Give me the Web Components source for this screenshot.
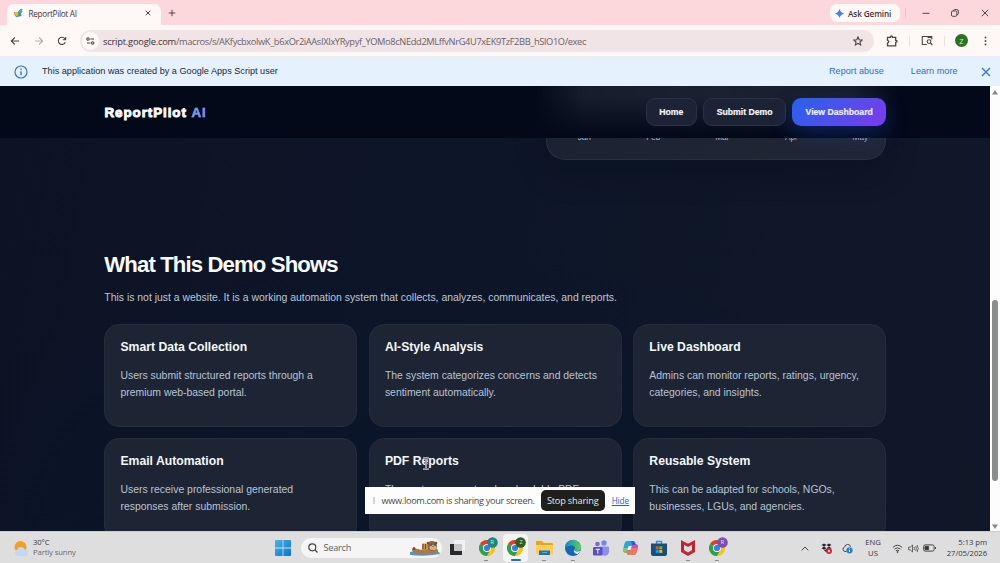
<!DOCTYPE html>
<html lang="en">
<head>
<meta charset="utf-8">
<title>ReportPilot AI</title>
<style>
  html, body { margin: 0; height: 100%; overflow: hidden; }
  body { font-family: "Liberation Sans", Arial, sans-serif; }
</style>
</head>
<body>
<desktop-screen>
  <tab-strip>ReportPilot AI</tab-strip>
  <url-bar>
    <span slot="host">script.google.com</span>
    <span slot="path">/macros/s/AKfycbxolwK_b6xOr2iAAsIXIxYRypyf_YOMo8cNEdd2MLffvNrG4U7xEK9TzF2BB_hSlO1O/exec</span>
  </url-bar>
  <info-bar>This application was created by a Google Apps Script user</info-bar>
  <site-page>
    <site-nav slot="nav">
      <nav-button>Home</nav-button>
      <nav-button>Submit Demo</nav-button>
      <nav-button class="primary">View Dashboard</nav-button>
    </site-nav>
    <chart-card slot="hero"></chart-card>
    <section-head>
      What This Demo Shows
      <span slot="lead">This is not just a website. It is a working automation system that collects, analyzes, communicates, and reports.</span>
    </section-head>
    <card-grid>
      <feature-card heading="Smart Data Collection">Users submit structured reports through a premium web-based portal.</feature-card>
      <feature-card heading="AI-Style Analysis">The system categorizes concerns and detects sentiment automatically.</feature-card>
      <feature-card heading="Live Dashboard">Admins can monitor reports, ratings, urgency, categories, and insights.</feature-card>
      <feature-card heading="Email Automation">Users receive professional generated responses after submission.</feature-card>
      <feature-card heading="PDF Reports">The system generates downloadable PDF</feature-card>
      <feature-card heading="Reusable System">This can be adapted for schools, NGOs, businesses, LGUs, and agencies.</feature-card>
    </card-grid>
  </site-page>
  <task-bar></task-bar>
  <share-bar slot="overlay">www.loom.com is sharing your screen.</share-bar>
  <text-cursor slot="overlay"></text-cursor>
</desktop-screen>

<script>
// small helper so every element gets its own open shadow root
function define(name, html) {
  const template = document.createElement("template");
  template.innerHTML = html;
  customElements.define(name, class extends HTMLElement {
    constructor() {
      super();
      this.attachShadow({ mode: "open" });
      this.shadowRoot.appendChild(template.content.cloneNode(true));
    }
  });
}

define("desktop-screen", `
  <style>
    :host { display: grid; grid-template-rows: 25px 31px 30px 445px 32px; width: 1000px; height: 563px; overflow: hidden; position: relative; }
  </style>
  <slot></slot>
  <slot name="overlay"></slot>`);

define("tab-strip", `
  <style>
    :host { display: flex; align-items: center; background: #fcd8dc; padding: 0 11px 0 7px; color: #3f3438; font: 8.2px "Open Sans", "Noto Sans", sans-serif; }
    .tab { display: flex; align-items: center; align-self: flex-end; box-sizing: border-box; width: 154px; height: 21.5px; padding: 0 10px 2px 6px; border-radius: 7px 7px 0 0; background: #fff8f7; }
    .name { flex: 1; margin-left: 5.500px; letter-spacing: -.3px; }
    .plus { margin-left: 7px; }
    .gemini { display: flex; align-items: center; gap: 4px; margin-left: auto; box-sizing: border-box; width: 70px; height: 18px; padding-left: 5px; border-radius: 7px; background: #fff8f7; font-weight: 600; letter-spacing: -.12px; margin-top: 1px; }
    .line { width: 1px; height: 10px; margin: 0 16px 0 5px; background: #e9c3c9; }
    .win { margin-right: 19px; }
    .win:last-child { margin-right: 0; }
    svg { display: block; fill: none; stroke: #51454a; stroke-width: 1; }
  </style>
  <div class="tab">
    <svg width="10" height="10" viewBox="0 0 10 10" style="stroke:none">
      <path d="M1 4 5 6 4 8.500 1.500 7z" fill="#ea4335"/><path d="M2 6.500 8 5 8.500 8 3 9.200z" fill="#4285f4"/>
      <path d="M4 5 7.500 1 9.500 3 6.500 7.500z" fill="#34a853"/><path d="M5 4 8.500.500 9.600 1.500 7 5z" fill="#4b9cf5"/><path d="M.800 5.500 3.500 3.800 5.500 6 4 8.400z" fill="#fbbc04"/>
    </svg>
    <span class="name"><slot></slot></span>
    <svg width="6" height="6" viewBox="0 0 6 6"><path d="M.7.7 5.300 5.300M5.300.7.7 5.300"/></svg>
  </div>
  <svg class="plus" width="8" height="8" viewBox="0 0 8 8"><path d="M4 .8v6.400M.8 4h6.400"/></svg>
  <div class="gemini">
    <svg width="9" height="9" viewBox="0 0 9 9" style="stroke:none"><defs><linearGradient id="g" x1="0" y1="1" x2="1" y2="0"><stop stop-color="#e6b838"/><stop offset=".35" stop-color="#4a86e8"/><stop offset=".7" stop-color="#3b7cf0"/><stop offset="1" stop-color="#ea5a50"/></linearGradient></defs><path fill="url(#g)" d="M4.500 0Q5.500 3.500 9 4.500 5.500 5.500 4.500 9 3.500 5.500 0 4.500 3.500 3.500 4.500 0z"/></svg>
    Ask Gemini
  </div>
  <div class="line"></div>
  <svg class="win" width="8" height="8" viewBox="0 0 8 8"><path d="M.5 4.300h7"/></svg>
  <svg class="win" style="margin-left:2px" width="8" height="8" viewBox="0 0 8 8"><rect x=".5" y="2" width="5.300" height="5.300" rx="1.200"/><path d="M2.300 1.800Q2.400.6 3.800.6H6q1.400 0 1.400 1.400v2.300q0 1.300-1.300 1.500"/></svg>
  <svg class="win" style="margin-left:3px" width="8" height="8" viewBox="0 0 8 8"><path d="M.8.8 7.200 7.200M7.200.8.8 7.200"/></svg>`);

define("url-bar", `
  <style>
    :host { display: flex; align-items: center; background: #fff8f7; padding: 0 9.500px 0 10px; }
    svg { display: block; flex: none; fill: none; stroke: #4c4347; stroke-width: 1.1; }
    .nav { margin-right: 13.5px; }
    .box { display: flex; align-items: center; box-sizing: border-box; width: 794px; height: 22px; margin-right: 12px; padding: 0 11px 0 2px; border-radius: 11px; background: #f0e4e7; }
    .chip { display: grid; place-items: center; width: 15px; height: 18px; border-radius: 9px; background: #fff8f7; padding: 0 1px; margin-right: 4px; }
    .url { flex: 1; white-space: nowrap; color: #6c6266; font: 9.3px "Open Sans", "Noto Sans", sans-serif; letter-spacing: -.37px; padding-top: 1px; }
    .host { color: #3a3034; letter-spacing: -.2px; }
    .line { width: 1px; height: 10px; background: #f5dcdf; }
    .who { display: grid; place-items: center; width: 13px; height: 13px; border-radius: 50%; background: #2a7220; color: #d9f0d2; font: 7.5px "Open Sans", sans-serif; margin: 0 15.500px 0 15px; }
  </style>
  <svg class="nav" width="10" height="10" viewBox="0 0 10 10"><path d="M9 5H1.500M4.800 1.500 1.300 5l3.500 3.500"/></svg>
  <svg class="nav" width="10" height="10" viewBox="0 0 10 10" style="stroke:#b9aeb1"><path d="M1 5h7.500M5.200 1.500 8.700 5 5.200 8.500"/></svg>
  <svg style="margin-right:13px" width="10" height="10" viewBox="0 0 10 10"><path d="M8.300 6.200A3.600 3.600 0 1 1 7.800 2.700L8.600 3.600M8.700.9v2.900H5.800"/></svg>
  <div class="box">
    <span class="chip"><svg width="9" height="8" viewBox="0 0 9 8"><circle cx="2" cy="2" r="1.200"/><path d="M4.300 2H8M1 6h3.400"/><circle cx="6.700" cy="6" r="1.200"/></svg></span>
    <span class="url"><span class="host"><slot name="host"></slot></span><slot name="path"></slot></span>
    <svg width="10" height="10" viewBox="0 0 10 10"><path d="M5 .9 6.200 3.700l3 .3L7 6l.6 3L5 7.400 2.400 9 3 6 .8 4l3-.3z"/></svg>
  </div>
  <svg width="12" height="12" viewBox="0 0 12 12"><path stroke-width="1.300" d="M1.500 2.300h3q0-1.500 1-1.500t1 1.500h3.200v3q1.400 0 1.400 1t-1.400 1v3.500H1.500V8q1.200-.2 1.200-1.300T1.500 5.300z"/></svg>
  <div class="line" style="margin:0 11px 0 11px"></div>
  <svg width="12" height="11" viewBox="0 0 12 11"><path d="M5.800 9.500H1.300V1.500h9.500v3"/><path stroke-width="2" d="M6.500 2h4.500"/><circle cx="8" cy="6.600" r="1.900"/><path d="M9.400 8l2 2"/></svg>
  <div class="line" style="margin-left:11px;margin-right:-5px"></div>
  <div class="who">Z</div>
  <svg width="3" height="10" viewBox="0 0 3 10" style="fill:#4c4347;stroke:none"><circle cx="1.500" cy="1.500" r=".9"/><circle cx="1.500" cy="5" r=".9"/><circle cx="1.500" cy="8.500" r=".9"/></svg>`);

define("info-bar", `
  <style>
    :host { display: flex; align-items: center; box-sizing: border-box; background: #e6f1fe; border-top: 1px solid #e9edf5; padding: 0 9.500px 0 14px; color: #202a38; font-size: 9.14px; }
    .msg { flex: 1; margin-left: 14px; }
    .msg, a { margin-top: -1px; }
    a { color: #2f6fc4; }
    svg { display: block; fill: none; stroke: #3478d4; }
  </style>
  <svg width="14" height="14" viewBox="0 0 14 14"><circle cx="7" cy="7" r="6" stroke-width="1.200"/><path stroke-width="1.400" d="M7 6.300v4M7 3.600V5"/></svg>
  <span class="msg"><slot></slot></span>
  <a>Report abuse</a>
  <a style="margin:-1px 23px 0 27px">Learn more</a>
  <svg width="10" height="10" viewBox="0 0 10 10"><path stroke-width="1.400" d="M1 1 9 9M9 1 1 9"/></svg>`);

define("site-page", `
  <style>
    :host { display: grid; grid-template-columns: 990px 10px; min-height: 0; overflow: hidden; }
    .view { display: grid; grid-template: 52px 1fr / 990px; height: 445px; overflow: hidden;
      background: radial-gradient(500px 260px at 430px 420px, #09152a 0%, transparent 100%), linear-gradient(100deg, #0c1325 0%, #0d1628 45%, #101828 100%); }
    .nav { grid-area: 1 / 1; z-index: 1; }
    main { grid-area: 1 / 1 / 3 / 2; display: flex; flex-direction: column; width: 782px; margin-left: 104.300px; min-height: 0; }
    .bar { display: flex; flex-direction: column; align-items: center; box-sizing: border-box; padding: 4px 0 2px; background: #fdfdfd; }
    .thumb { width: 5.500px; height: 181px; margin: 205px 0 43px; border-radius: 3px; background: #8b8e8c; }
    svg { display: block; flex: none; fill: #85888a; }
  </style>
  <div class="view">
    <div class="nav"><slot name="nav"></slot></div>
    <main><slot name="hero"></slot><slot></slot></main>
  </div>
  <div class="bar">
    <svg width="6" height="5" viewBox="0 0 6 5"><path d="M3 0 6 4.500H0z"/></svg>
    <div class="thumb"></div>
    <svg width="6" height="5" viewBox="0 0 6 5"><path d="M0 .5h6L3 5z"/></svg>
  </div>`);

define("site-nav", `
  <style>
    :host { display: flex; align-items: center; box-sizing: border-box; height: 52px; padding: 0 104px 0 104.500px; gap: 6.200px;
      background:
        linear-gradient(180deg, transparent 20%, #030919 95%),
        linear-gradient(90deg, transparent 535px, #161d2d 585px, #1a2131 720px, #161d2d 850px, transparent 900px), #030919; }
    .logo { margin-right: auto; color: #f8fafc; font-weight: 700; font-size: 13.4px; letter-spacing: .92px; -webkit-text-stroke: .9px; }
    .logo b { color: transparent; background: linear-gradient(90deg, #4fb0f5, #9a7bf5); background-clip: text; -webkit-background-clip: text; -webkit-text-stroke: .5px #7495f5aa; }
  </style>
  <div class="logo">ReportPilot <b>AI</b></div>
  <slot></slot>`);

define("nav-button", `
  <style>
    :host { display: block; box-sizing: border-box; height: 28.500px; line-height: 26px; padding: 0 12.600px; border: 1px solid #2b3343; border-radius: 9px; background: #1c2334; color: #f3f6fa; font-size: 8.68px; font-weight: 700; white-space: nowrap; -webkit-text-stroke: .2px; }
    :host(.primary) { border: 0; line-height: 28px; padding: 0 13.200px; color: #eef0ff; background: linear-gradient(135deg, #2563eb, #7c3aed); box-shadow: 0 8px 22px #1d4ed84d; }
  </style>
  <slot></slot>`);

define("chart-card", `
  <style>
    :host { display: flex; align-items: flex-end; align-self: flex-end; flex: none; box-sizing: border-box; width: 340.500px; height: 73.500px; padding: 0 0 17px; border: 1px solid #263040; border-top: 0; border-radius: 0 0 19px 19px; background: linear-gradient(90deg, #1b2231, #202735); box-shadow: 0 12px 32px #030a1844; }
    .row { display: flex; flex: none; width: 345px; margin-left: 3px; }
    span { flex: 1; text-align: center; color: #a9b3c2; font-size: 8.2px; line-height: 9px; }
  </style>
  <div class="row"><span>Jan</span><span>Feb</span><span>Mar</span><span>Apr</span><span>May</span></div>`);

define("section-head", `
  <style>
    :host { display: block; margin-top: 92.500px; }
    h2 { margin: 0; color: #f8fafc; font-size: 22.2px; line-height: 26px; letter-spacing: -.9px; }
    p { margin: 12px 0 0; color: #bcc6d6; font-size: 10.43px; line-height: 16.700px; }
  </style>
  <h2><slot></slot></h2>
  <p><slot name="lead"></slot></p>`);

define("card-grid", `
  <style>
    :host { display: grid; grid-template-columns: repeat(3, 1fr); grid-auto-rows: 103px; gap: 11px 11.300px; margin-top: 17.500px; }
  </style>
  <slot></slot>`);

class FeatureCard extends HTMLElement {
  constructor() {
    super();
    this.attachShadow({ mode: "open" });
    this.shadowRoot.innerHTML = `
    <style>
      :host { display: block; box-sizing: border-box; padding: 15px 15.200px; border: 1px solid #222d3d; border-radius: 15px; background: #1d2535; }
      h3 { margin: 0 0 13.800px; color: #f4f7fb; font-size: 12.19px; line-height: 14px; }
      p { margin: 0; color: #b9c3d3; font-size: 10.43px; line-height: 16.700px; }
    </style>
    <h3></h3>
    <p><slot></slot></p>`;
  }

  connectedCallback() {
    this.shadowRoot.querySelector("h3").textContent = this.getAttribute("heading");
  }
}
customElements.define("feature-card", FeatureCard);

// floating over the page, like the real sharing banner
define("share-bar", `
  <style>
    :host { position: absolute; left: 365px; top: 486.500px; display: flex; align-items: center; box-sizing: border-box; width: 270px; height: 27px; padding: 0 6px 0 8px; background: #fdfdfd; color: #4a4a4c; font: 9.2px "Open Sans", "Noto Sans", sans-serif; white-space: nowrap; z-index: 2; }
    .grip { width: 2px; height: 7px; border: solid #d4d4d4; border-width: 0 1px; box-sizing: border-box; margin-right: 6.500px; }
    .msg { flex: 1; letter-spacing: -.33px; }
    button { width: 64px; height: 21px; padding: 0; border: 0; border-radius: 5px; background: #1f1f1d; color: #e9e9e7; font: inherit; letter-spacing: -.17px; margin-right: 7px; }
    a { color: #2d62c0; text-decoration: underline; font-size: 8.2px; letter-spacing: -.1px; }
  </style>
  <span class="grip"></span><span class="msg"><slot></slot></span><button>Stop sharing</button><a>Hide</a>`);

define("text-cursor", `
  <style>
    :host { position: absolute; left: 422px; top: 457px; z-index: 3; }
    svg { display: block; fill: none; }
  </style>
  <svg width="8" height="13" viewBox="0 0 8 13"><path stroke="#e9eef5" stroke-width="1.800" d="M1 1.200h2.200L4 2l.8-.8H7M4 2v9M1 11.800h2.200L4 11l.8.8H7"/><path stroke="#1c2535" stroke-width=".7" d="M1 1.200h2.200L4 2l.8-.8H7M4 2v9M1 11.800h2.200L4 11l.8.8H7"/></svg>`);

define("chrome-icon", `
  <style>
    :host { display: grid; grid-template: 24px / 20px; width: 20px; height: 24px; margin-left: 4px; }
    svg { display: block; overflow: visible; grid-area: 1 / 1; }
    .letter { grid-area: 1 / 1; justify-self: end; width: 11px; text-align: center; color: #d9e9e4; font-size: 5.5px; line-height: 13px; }
  </style>
  <svg width="20" height="24" viewBox="0 0 20 24">
    <circle cx="9" cy="12" r="8" fill="#fbc116"/>
    <path d="M9 12 2.070 8A8 8 0 0 1 15.930 8z" fill="#e33b2e"/>
    <path d="M9 12 2.070 8A8 8 0 0 0 9 20l3.500-6z" fill="#2ba24c"/>
    <path d="M9 8.200h6.900A8 8 0 0 1 9 20l3.500-6z" fill="#fbc116"/>
    <circle cx="9" cy="12" r="4" fill="#fff"/><circle cx="9" cy="12" r="3.100" fill="#3b7de8"/>
    <circle cx="14.500" cy="6.500" r="5.300" fill="var(--badge, #17897f)"/>
  </svg>
  <span class="letter"><slot></slot></span>`);

define("task-bar", `
  <style>
    :host { display: flex; align-items: center; box-sizing: border-box; padding: 1px 13px 0 12px; border-top: 1px solid #c9cad2; background: #dededf; color: #38383b; font: 7.7px/10.500px "Open Sans", "Noto Sans", sans-serif; white-space: nowrap; }
    svg { display: block; flex: none; overflow: visible; }
    .weather { width: 241px; margin-left: 4px; margin-top: -2px; letter-spacing: -.12px; }
    .weather small { display: block; font-size: inherit; color: #69696c; }
    .start { margin: 0 9.500px 0 1px; }
    .search { display: flex; align-items: center; box-sizing: border-box; width: 141px; height: 20px; padding: 0 1px 0 7px; border-radius: 10px; background: #f5f5f5; color: #606063; font-size: 9.2px; }
    .search span { flex: 1; margin-left: 6px; letter-spacing: -.25px; }
    .apps { display: flex; margin-left: 1px; }
    .app { display: grid; place-items: center; width: 28.800px; height: 28px; position: relative; }
    .app.run::after { content: ""; position: absolute; bottom: 1px; left: 13px; width: 4px; height: 1.500px; border-radius: 1px; background: #85858a; }
    .app.on::after { left: 10.500px; width: 10px; height: 2px; background: #1f72b8; }
    .app.on::before { content: ""; position: absolute; inset: 0 1px 0 3px; border-radius: 4px; background: #f4f4f5; }
    .app > * { position: relative; }
    .tray { display: flex; align-items: center; margin-left: auto; }
    .tray svg { fill: none; stroke: #46464a; }
    .lang { text-align: center; width: 18px; margin: -1px 9.500px 0 11px; }
    .time { text-align: right; width: 47px; margin: -1px 0 0 4px; letter-spacing: -.05px; }
  </style>
  <svg width="17" height="17" viewBox="0 0 17 17">
    <circle cx="8.500" cy="7" r="6" fill="#f3a021"/><path d="M5.500 16a3.200 3.200 0 0 1-.5-6.200A4.200 4.200 0 0 1 12.800 9.500 3.300 3.300 0 0 1 13.500 16z" fill="#c3d8f5"/>
  </svg>
  <div class="weather">30°C<small>Partly sunny</small></div>

  <svg class="start" width="16" height="16" viewBox="0 0 16 16"><defs><linearGradient id="w" x2="1" y2="1"><stop stop-color="#43b6ec"/><stop offset="1" stop-color="#0873c8"/></linearGradient></defs><path fill="url(#w)" d="M1 0h6.600v7.600H0V1Q0 0 1 0zM8.400 0H15q1 0 1 1v6.600H8.400zM0 8.400h7.600V16H1q-1 0-1-1zM8.400 8.400H16V15q0 1-1 1H8.400z"/></svg>
  <div class="search">
    <svg width="10" height="10" viewBox="0 0 10 10" fill="none" stroke="#444" stroke-width="1.200"><circle cx="4.300" cy="4.300" r="3.500"/><path d="M7 7l2.500 2.500"/></svg>
    <span>Search</span>
    <svg width="32" height="16" viewBox="0 0 32 16">
      <path d="M1 12q14-4 29 0l1 2q-14 3-30 1z" fill="#4f9ac4"/>
      <path d="M3 9q5-1 9 1 3-3 7-3l8 1q4 3 1 5-10 2-20 1-5-1-5-5z" fill="#a87a52"/>
      <circle cx="23" cy="6" r="5" fill="#8d6442"/><ellipse cx="24" cy="7.500" rx="3.500" ry="2.600" fill="#d0b08b"/>
      <circle cx="19" cy="3" r="1.300" fill="#76502f"/><circle cx="27" cy="3" r="1.300" fill="#76502f"/><circle cx="22" cy="5" r=".6"/><circle cx="26" cy="5" r=".6"/><path d="M23.300 6.500h1.500l-.7.8z"/>
      <path d="M13 3.500h5l1 6h-6z" fill="#c99b55"/><path d="M14 4v5M16.500 4v5" stroke="#5c452e"/><circle cx="5" cy="8.500" r="1.500" fill="#6e4e35"/>
    </svg>
  </div>

  <div class="apps">
    <div class="app"><svg width="16" height="16" viewBox="0 0 16 16"><path d="M5 0h11v11H5z" fill="#f1f1f1"/><path d="M1 4h4v7h8v4H2q-1 0-1-1z" fill="#292a2c"/><path d="M5 4h8v7H5z" fill="#c6c7c9"/></svg></div>
    <div class="app run"><chrome-icon>R</chrome-icon></div>
    <div class="app run on"><chrome-icon style="--badge:#29601f">Z</chrome-icon></div>
    <div class="app run"><svg style="margin-left:3px" width="17" height="16" viewBox="0 0 17 16"><path d="M0 2q0-1 1-1h5l2 2h8q1 0 1 1v10H0z" fill="#e9a51c"/><path d="M0 5h17v8.500q0 1-1 1H1q-1 0-1-1z" fill="#fbd056"/><path d="M3 10.500h11V15H3z" fill="#1875bc"/><path d="M6 12.500h5" stroke="#58a9df"/></svg></div>
    <div class="app run"><svg style="margin-left:2px" width="16" height="16" viewBox="0 0 16 16"><defs><linearGradient id="e" x2="1"><stop stop-color="#1686cf"/><stop offset="1" stop-color="#5bd155"/></linearGradient></defs><circle cx="8" cy="8" r="8" fill="#1267b4"/><path d="M0 8A8 8 0 0 1 16 7.500Q16 11 12 11 9 11 10 8.500 10 5.500 7 5.500 3 5.300 0 8z" fill="url(#e)"/><path d="M9.300 8.400Q8.800 11.200 12 11.500q2 .1 3.500-.7-1 2-3 3.200Q7.500 13 9.300 8.400z" fill="#e7f0f3"/></svg></div>
    <div class="app"><svg width="16" height="17" viewBox="0 0 16 17"><circle cx="4.500" cy="4" r="2.300" fill="#6a6fd8"/><circle cx="11" cy="3" r="2.700" fill="#7b83eb"/><path d="M7 6.500h8q1 0 1 1V12a4.300 4.300 0 0 1-8.500 0z" fill="#8d8fee"/><rect y="7" width="9.500" height="8.500" rx="1.200" fill="#5a4fc8"/><path d="M2.600 9.300h4.400M4.800 9.300v4.400" stroke="#fff"/></svg></div>
    <div class="app"><svg style="margin-left:2px" width="17" height="16" viewBox="0 0 17 16"><path d="M5 1h6q1.500 0 2 1.500l.8 2.500H10L7.500 13H4.500Q1 13 1 10l1.500-6.500Q3 1 5 1z" fill="#2aa6d5"/><path d="M1 8h5.500L5 13Q1 13.500 1 10z" fill="#8cc850"/><path d="M12 15H7q-1.500 0-2-1.500L4.300 11H8L10 4h3q3.500 0 3 3l-1.500 5.500Q14 15 12 15z" fill="#d04ac0"/><path d="M4.500 11H8l1-3h6.500L14 13q-.6 2-2 2H7q-2 0-2.500-4z" fill="#f57852"/><path d="M9 1h2q1.500 0 2 1.500l.8 2.500H10z" fill="#2765cf"/><path d="M6.500 6h3.300L8.500 10H5.500z" fill="#e7eaf0"/></svg></div>
    <div class="app"><svg style="margin-left:2px" width="16" height="16" viewBox="0 0 16 16"><path d="M5.500 4V1.500h5V4" fill="none" stroke="#3091c9" stroke-width="1.300"/><path d="M0 3.500h16V14q0 2-2 2H2q-2 0-2-2z" fill="#174f7e"/><path d="M4.700 6.300h3v3h-3z" fill="#f25022"/><path d="M8.300 6.300h3v3h-3z" fill="#7fba00"/><path d="M4.700 9.900h3v3h-3z" fill="#00a4ef"/><path d="M8.300 9.900h3v3h-3z" fill="#ffb900"/></svg></div>
    <div class="app run"><svg style="margin-left:2px" width="14" height="16" viewBox="0 0 14 16"><path d="M0 0 7 3.800 14 0v12L7 16 0 12zM3 4.800v5.500l4 2.300 4-2.300V4.800L7 7z" fill="#c42432" fill-rule="evenodd"/></svg></div>
    <div class="app run"><chrome-icon style="--badge:#7b4fb0">R</chrome-icon></div>
  </div>

  <div class="tray">
    <svg width="8" height="5" viewBox="0 0 8 5"><path d="M.7 4.300 4 1l3.300 3.300"/></svg>
    <svg style="margin-left:12px" width="11" height="11" viewBox="0 0 11 11"><path stroke="none" fill="#26262a" d="M3 .5 5.500 2 3 3.600.500 2zM8 .5 10.500 2 8 3.600 5.500 2zM3 3.600 5.500 5.200 3 6.800.500 5.200zM8 3.600l2.500 1.600L8 6.800 5.500 5.200zM5.500 6 8 7.600 5.500 9.200 3 7.600z"/><circle cx="8" cy="8" r="3" fill="#d3294b" stroke="none"/><path stroke="#fff" stroke-width=".7" d="m7 7 2 2M9 7 7 9"/></svg>
    <svg style="margin-left:10px" width="11" height="11" viewBox="0 0 11 11"><path d="M4.500 8.500H3A2.300 2.300 0 0 1 2.700 4 3 3 0 0 1 8.600 3.800"/><circle cx="7.500" cy="7.300" r="3.100" fill="#1f7fd0" stroke="none"/><path stroke="#fff" d="M7.500 5.500v.9M7.500 7v2"/></svg>
    <div class="lang">ENG<br>US</div>
    <svg width="11" height="9" viewBox="0 0 11 9"><path d="M.8 3.500q4.700-4.600 9.400 0M2.500 5.200q3-2.900 6 0M4 6.800q1.500-1.300 3 0"/><circle cx="5.500" cy="8" r=".6"/></svg>
    <svg style="margin-left:5px" width="11" height="9" viewBox="0 0 11 9"><path stroke-width=".8" d="M.6 3.200h1.600L4.500 1v7L2.200 5.800H.6zM6 3q1 1.500 0 3M7.600 2q1.700 2.500 0 5M9.100 1q2.300 3.500 0 7"/></svg>
    <svg style="margin-left:4.500px" width="13" height="8" viewBox="0 0 13 8"><rect x=".6" y=".9" width="10.500" height="6.200" rx="1.600"/><path d="M12.400 3v2"/><path d="M2 2.400h3.500v3.200H2z" fill="#333"/></svg>
    <div class="time">5:13 pm<br>27/05/2026</div>
  </div>`);
</script>
</body>
</html>
